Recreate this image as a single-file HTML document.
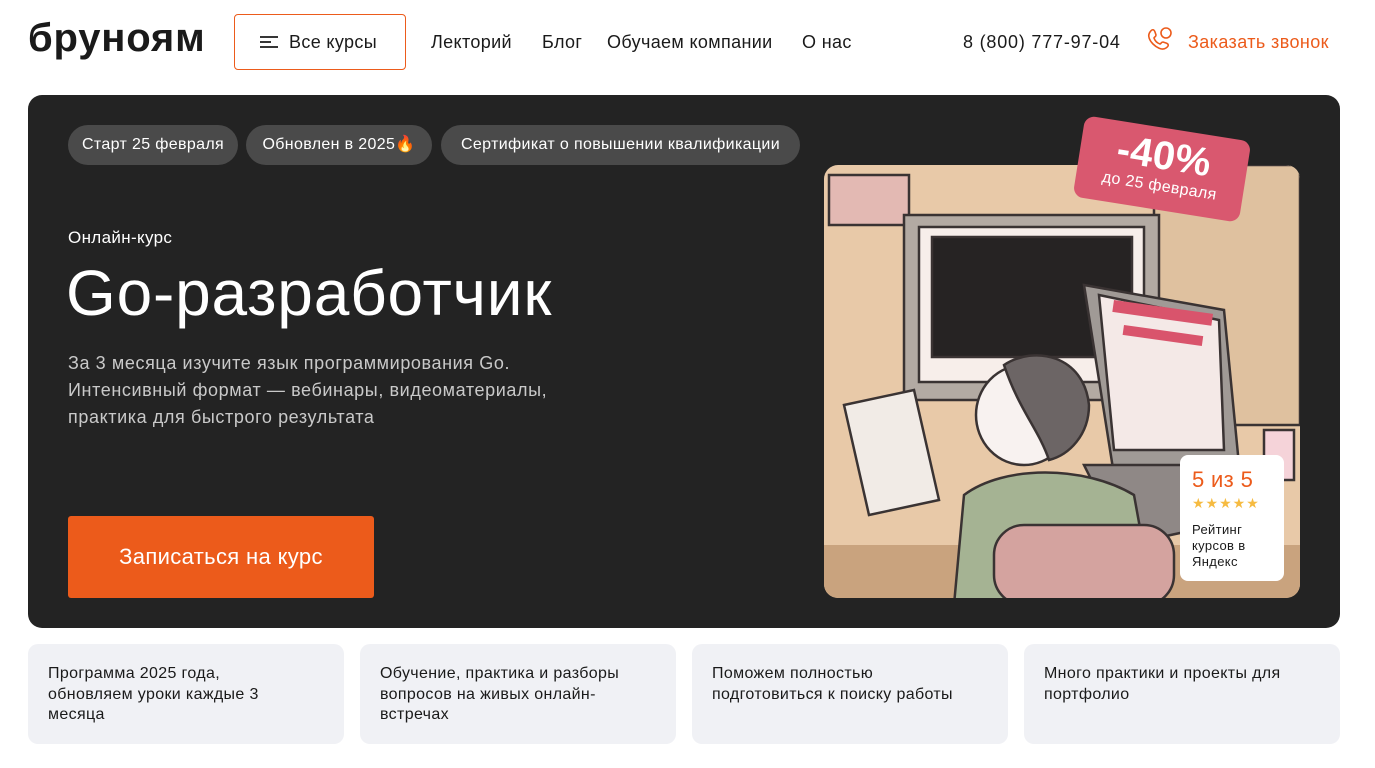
<!DOCTYPE html>
<html><head><meta charset="utf-8"><style>
*{margin:0;padding:0;box-sizing:border-box}
body{width:1375px;height:768px;background:#fff;font-family:"Liberation Sans","DejaVu Sans",sans-serif;color:#1a1a1a;position:relative;overflow:hidden;letter-spacing:0.35px}
.abs{position:absolute}
.logo{left:28px;top:16px;font-size:40px;font-weight:700;letter-spacing:0.8px}
.btn{left:234px;top:14px;width:172px;height:56px;border:1px solid #ec5b1b;border-radius:4px;font-size:18px;display:flex;align-items:center;padding-left:24px}
.nav{top:32px;font-size:18px}
.hero{left:28px;top:95px;width:1312px;height:533px;background:#232323;border-radius:14px}
.tag{top:125px;height:40px;background:#4a4a4a;color:#fff;border-radius:20px;font-size:16px;line-height:40px;text-align:center;white-space:nowrap}
.card{top:644px;width:316px;height:100px;background:#f0f1f5;border-radius:10px;padding:20px 40px 20px 20px;font-size:16px;line-height:20.5px}
</style></head><body>
<div class="abs logo">бруноям</div>
<div class="abs btn"><svg width="20" height="16" style="margin-right:10px"><path d="M1 3h18M1 8h11M1 13h18" stroke="#1a1a1a" stroke-width="1.8"/></svg>Все курсы</div>
<div class="abs nav" style="left:431px">Лекторий</div>
<div class="abs nav" style="left:542px">Блог</div>
<div class="abs nav" style="left:607px">Обучаем компании</div>
<div class="abs nav" style="left:802px">О нас</div>
<div class="abs nav" style="left:963px;letter-spacing:0.8px">8 (800) 777-97-04</div>
<svg class="abs" style="left:1146px;top:26px" width="28" height="26"><path d="M4 6c2-3 4-3 5 0l1 3c0 2-2 2-2 3 1 3 3 5 6 6 1 0 1-2 3-2l3 1c3 1 3 3 0 5-4 3-10-1-13-4S1 10 4 6z" fill="none" stroke="#ec5b1b" stroke-width="1.6"/><circle cx="20" cy="7" r="5" fill="none" stroke="#ec5b1b" stroke-width="1.6"/></svg>
<div class="abs nav" style="left:1188px;color:#ec5b1b;letter-spacing:0.4px">Заказать звонок</div>
<div class="abs hero"></div>
<div class="abs tag" style="left:68px;width:170px">Старт 25 февраля</div>
<div class="abs tag" style="left:246px;width:186px">Обновлен в 2025🔥</div>
<div class="abs tag" style="left:441px;width:359px">Сертификат о повышении квалификации</div>
<div class="abs" style="left:68px;top:228px;color:#fff;font-size:17px">Онлайн-курс</div>
<div class="abs" style="left:66px;top:256px;color:#fff;font-size:64px;letter-spacing:0.8px">Go-разработчик</div>
<div class="abs" style="left:68px;top:350px;color:#c9c9c9;font-size:18px;line-height:27px;letter-spacing:0.6px">За 3 месяца изучите язык программирования Go.<br>Интенсивный формат — вебинары, видеоматериалы,<br>практика для быстрого результата</div>
<div class="abs" style="left:68px;top:516px;width:306px;height:82px;background:#ec5b1b;border-radius:3px;color:#fff;font-size:22px;line-height:82px;text-align:center">Записаться на курс</div>
<svg class="abs" style="left:824px;top:165px" width="476" height="433">
<defs><clipPath id="c"><rect width="476" height="433" rx="14"/></clipPath></defs>
<g clip-path="url(#c)" stroke="#3a3333" stroke-width="2.5">
<rect width="476" height="433" fill="#e8c9a8" stroke="none"/>
<rect x="0" y="380" width="476" height="60" fill="#c9a37e" stroke="none"/>
<rect x="330" y="0" width="146" height="260" fill="#dfc19f"/>
<rect x="5" y="10" width="80" height="50" fill="#e3b9b3"/>
<rect x="80" y="50" width="255" height="185" fill="#b3aaa3"/>
<rect x="95" y="62" width="225" height="155" fill="#f7eeea"/>
<rect x="108" y="72" width="200" height="120" fill="#262323"/>
<path d="M260 120 L400 145 L415 300 L290 310 Z" fill="#a09a96"/>
<path d="M275 130 L395 155 L400 285 L290 285 Z" fill="#f4e9e7"/>
<rect x="290" y="135" width="100" height="12" fill="#d9546c" stroke="none" transform="rotate(8 290 135)"/>
<rect x="300" y="160" width="80" height="10" fill="#d9546c" stroke="none" transform="rotate(8 300 160)"/>
<path d="M260 300 L410 300 L440 350 L300 380 Z" fill="#8f8886"/>
<ellipse cx="200" cy="250" rx="48" ry="50" fill="#f8f2f0"/>
<path d="M180 200 c30-20 80-10 85 40 c0 30-20 50-40 55 c-10-30-30-50-45-95z" fill="#6c6565"/>
<path d="M140 330 c40-30 120-30 170 0 l20 110 h-200z" fill="#a5b393"/>
<rect x="170" y="360" width="180" height="80" rx="30" fill="#d4a39f"/>
<path d="M20 240 l70-15 l25 110 l-70 15z" fill="#f1ebe6"/>
<rect x="440" y="265" width="30" height="50" fill="#f5d3d9"/>
</g></svg>
<div class="abs" style="left:1180px;top:455px;width:104px;height:126px;background:#fff;border-radius:8px;padding:12px">
<div style="color:#ec5b1b;font-size:22px">5 из 5</div>
<div style="color:#f6bb41;font-size:14px;letter-spacing:1px;margin-top:2px">★★★★★</div>
<div style="font-size:13px;line-height:16px;margin-top:10px">Рейтинг курсов в Яндекс</div></div>
<div class="abs" style="left:1078px;top:128px;width:168px;height:82px;background:#d9586f;border-radius:10px;transform:rotate(9deg);color:#fff;text-align:center">
<div style="font-size:40px;font-weight:700;line-height:44px;margin-top:6px">-40%</div>
<div style="font-size:16px">до 25 февраля</div></div>
<div class="abs card" style="left:28px;padding-right:60px">Программа 2025 года, обновляем уроки каждые 3 месяца</div>
<div class="abs card" style="left:360px;padding-right:50px">Обучение, практика и разборы вопросов на живых онлайн-встречах</div>
<div class="abs card" style="left:692px;padding-right:30px">Поможем полностью подготовиться к поиску работы</div>
<div class="abs card" style="left:1024px;padding-right:30px">Много практики и проекты для портфолио</div>
</body></html>
